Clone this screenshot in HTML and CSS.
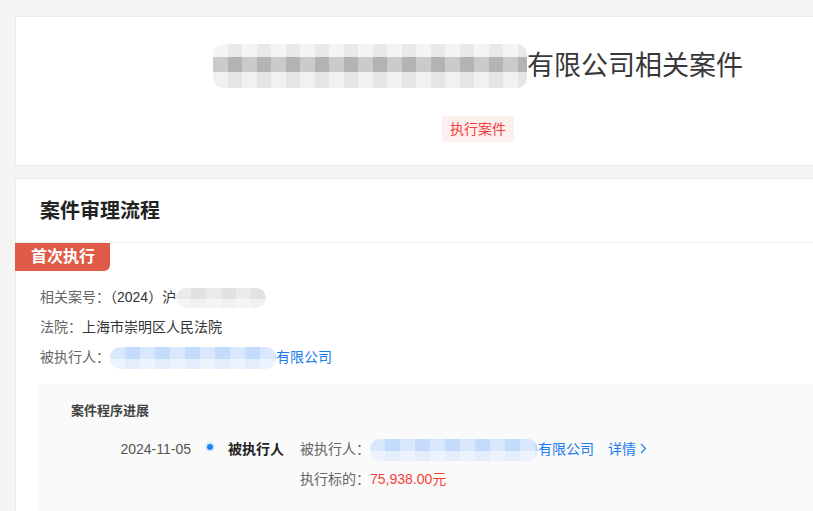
FILE: index.html
```html
<!DOCTYPE html>
<html lang="zh-CN">
<head>
  <meta charset="UTF-8">
  <meta name="viewport" content="width=device-width, initial-scale=1.0">
  <title>相关案件</title>
  <link rel="stylesheet" href="styles.css">
</head>
<body>
  <div class="page">
    <div class="card summary">
      <h1 class="case-title"><span class="mosaic mosaic-title"></span>有限公司相关案件</h1>
      <span class="tag">执行案件</span>
    </div>

    <div class="card flow">
      <h2 class="flow-title">案件审理流程</h2>
      <div class="stage">首次执行</div>
      <div class="info">
        <div class="info-row"><span class="label">相关案号：</span>（2024）沪<span class="mosaic mosaic-no"></span></div>
        <div class="info-row"><span class="label">法院：</span>上海市崇明区人民法院</div>
        <div class="info-row"><span class="label">被执行人：</span><a class="link" href="#"><span class="mosaic mosaic-blue mosaic-party"></span>有限公司</a></div>
      </div>

      <div class="progress">
        <div class="progress-title">案件程序进展</div>
        <div class="event">
          <div class="event-date">2024-11-05</div>
          <div class="event-dot"><span class="dot"></span></div>
          <div class="event-name">被执行人</div>
          <div class="event-body">
            <div class="event-line"><span class="label">被执行人：</span><a class="link" href="#"><span class="mosaic mosaic-blue mosaic-party2"></span>有限公司</a><a class="link more" href="#">详情<svg width="7" height="11" viewBox="0 0 7 11"><path d="M1 1l4.5 4.5L1 10" fill="none" stroke="#1a7cf0" stroke-width="1.2"/></svg></a></div>
            <div class="event-line"><span class="label">执行标的：</span><span class="amount">75,938.00元</span></div>
          </div>
        </div>
      </div>
    </div>
  </div>
</body>
</html>
```

FILE: styles.css
```css
html, body {
  margin: 0;
  padding: 0;
}
body {
  font-family: "Liberation Sans", "Noto Sans CJK SC", sans-serif;
  background-color: #f5f5f5;
  color: #333;
  overflow: hidden;
  width: 813px;
  height: 511px;
}
.page {
  padding: 16px 0 0 15px;
  display: flex;
  flex-direction: column;
  gap: 12px;
}
.card {
  background: #fff;
  border: 1px solid #ebebeb;
  width: 926px;
  box-sizing: border-box;
}
/* 顶部标题卡片 */
.summary {
  display: flex;
  flex-direction: column;
  align-items: center;
  padding: 31px 0 23px;
}
.case-title {
  margin: 0;
  height: 36px;
  font-size: 27px;
  font-weight: normal;
  line-height: 36px;
  color: #383838;
  display: flex;
  align-items: center;
}
.tag {
  margin-top: 32px;
  height: 26px;
  line-height: 26px;
  padding: 0 8px;
  font-size: 14px;
  color: #f0403c;
  background: #fff0f0;
  border-radius: 2px;
}
/* 打码 */
.mosaic {
  display: inline-block;
  border-radius: 10px;
  filter: blur(0.6px);
}
.mosaic-title {
  width: 314px;
  height: 44px;
  margin: -4px 0;
  background:
    repeating-linear-gradient(90deg, rgba(255,255,255,0.25) 0 15px, rgba(0,0,0,0.03) 15px 29px),
    linear-gradient(#f1f1f1 0 30%, #b9b9b9 30% 64%, #ececec 64%);
}
.mosaic-no {
  width: 90px;
  height: 20px;
  vertical-align: middle;
  background:
    repeating-linear-gradient(90deg, rgba(255,255,255,0.3) 0 15px, transparent 15px 30px),
    linear-gradient(#e2e2e2 0 55%, #f1f1f1 55%);
}
.mosaic-blue {
  vertical-align: middle;
  background:
    repeating-linear-gradient(90deg, rgba(255,255,255,0.35) 0 15px, transparent 15px 30px),
    linear-gradient(#c4dbfb 0 55%, #e3edfc 55%);
}
.mosaic-party {
  width: 166px;
  height: 22px;
}
.mosaic-party2 {
  width: 168px;
  height: 22px;
}
/* 流程卡片 */
.flow {
  padding-bottom: 40px;
}
.flow-title {
  margin: 0;
  height: 63px;
  line-height: 64px;
  padding-left: 24px;
  font-size: 20px;
  font-weight: bold;
  color: #222;
  border-bottom: 1px solid #eee;
}
.stage {
  display: inline-block;
  margin-left: -1px;
  height: 28px;
  line-height: 28px;
  padding: 0 15px 0 16px;
  font-size: 16px;
  font-weight: bold;
  color: #fff;
  background: #e05b47;
  border-radius: 0 0 6px 0;
}
.info {
  padding: 11px 24px 0 24px;
}
.info-row {
  line-height: 30px;
  font-size: 14px;
  color: #333;
}
.label {
  color: #666;
}
.link {
  color: #1a7cf0;
  text-decoration: none;
}
.progress {
  margin: 12px 0 0 23px;
  background: #fafafa;
  padding: 16px 32px 30px;
}
.progress-title {
  font-size: 13px;
  font-weight: bold;
  color: #444;
  line-height: 22px;
}
.event {
  display: flex;
  margin-top: 12px;
  font-size: 14px;
  line-height: 30px;
}
.event-date {
  width: 120px;
  text-align: right;
  color: #555;
}
.event-dot {
  width: 37px;
  display: flex;
  justify-content: center;
  padding-top: 10px;
  box-sizing: border-box;
}
.dot {
  width: 6px;
  height: 6px;
  border-radius: 50%;
  background: #1a86f5;
  box-shadow: 0 0 0 2px #d9eafd;
}
.event-name {
  font-weight: bold;
  color: #222;
  margin-right: 16px;
}
.more {
  margin-left: 14px;
}
.more svg {
  margin-left: 4px;
}
.amount {
  color: #f5403a;
}
```
